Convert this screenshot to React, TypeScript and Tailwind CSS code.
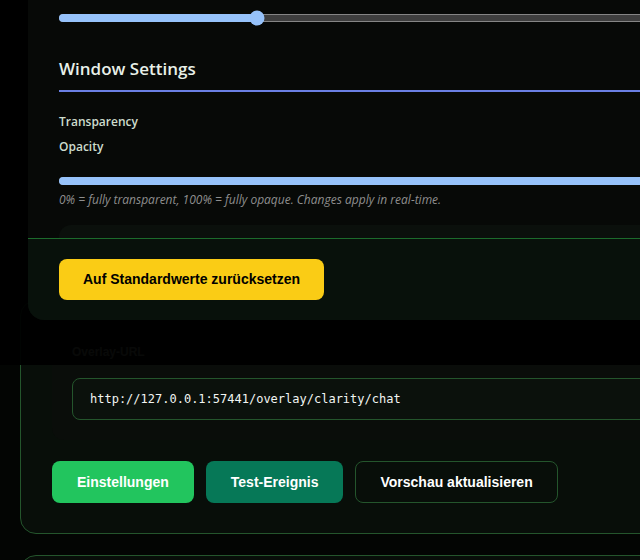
import React from "react";

const Slider = ({ filled, thumb }: { filled: number; thumb?: boolean }) => {
  return (
    <div className="relative h-[8px] w-[640px] rounded-full border border-[#858585] bg-[#3e3e3e]">
      <div
        className="absolute -left-px -top-px h-[8px] rounded-full bg-[#96c2fa]"
        style={{ width: filled }}
      />
      {thumb && (
        <div
          className="absolute top-1/2 h-[15px] w-[15px] -translate-x-1/2 -translate-y-1/2 rounded-full bg-[#96c2fa]"
          style={{ left: filled }}
        />
      )}
    </div>
  );
};

const SettingsModal = () => {
  return (
    <div className="absolute left-[28px] top-0 flex h-[320px] w-[700px] flex-col overflow-hidden rounded-bl-2xl bg-[#070907] font-['Open_Sans',sans-serif]">
      <div className="flex-1 overflow-hidden pl-[31px] pt-[14px]">
        <Slider filled={197} thumb />

        <h2 className="mt-[34px] border-b-2 border-[#6a7fe3] pb-[8px] text-[17px] font-semibold text-[#e8f0e8]">
          Window Settings
        </h2>

        <div className="mt-[21px] text-[12px] font-semibold text-[#cddccd]">
          Transparency
        </div>
        <div className="mt-[7px] text-[12px] font-semibold text-[#cddccd]">
          Opacity
        </div>

        <div className="mt-[21px]">
          <Slider filled={640} />
        </div>
        <p className="mt-[6px] text-[12px] italic text-[#8e8e8e]">
          0% = fully transparent, 100% = fully opaque. Changes apply in real-time.
        </p>

        <div className="mt-[16px] h-[40px] rounded-tl-xl bg-[#0b100c]" />
      </div>

      <div className="border-t border-[#1c6b2c] bg-[#08110b] px-[31px] pb-[20px] pt-[20px]">
        <button className="flex h-[41px] items-center rounded-lg bg-[#facc15] px-6 font-['Liberation_Sans',Arial,sans-serif] text-[14px] font-bold text-black">
          Auf Standardwerte zurücksetzen
        </button>
      </div>
    </div>
  );
};

export default function App() {
  return (
    <div className="relative h-[560px] w-[640px] overflow-hidden bg-[#030503] font-['Liberation_Sans',Arial,sans-serif]">
      <div className="flex flex-col gap-[21px] pl-5 pt-[300px]">
        <div className="w-[700px] rounded-2xl border border-[#24552c] bg-[#080e09] px-[31px] pb-[30px] pt-[39px]">
          <div className="rounded-xl bg-[#0a0d0a] pb-5 pl-5 pt-1">
            <div className="mb-[18px] text-[12px] font-semibold leading-4 text-[#9aa89a]">
              Overlay-URL
            </div>
            <div className="flex h-[42px] items-center rounded-lg border border-[#24552c] bg-[#0b110c] pl-[17px] font-['DejaVu_Sans_Mono',monospace] text-[12px] text-[#f2f5f2]">
              http://127.0.0.1:57441/overlay/clarity/chat
            </div>
          </div>

          <div className="mt-[21px] flex gap-3">
            <button className="flex h-[42px] items-center rounded-lg border border-transparent bg-[#22c55e] px-6 text-[14px] font-bold text-white">
              Einstellungen
            </button>
            <button className="flex h-[42px] items-center rounded-lg border border-transparent bg-[#067857] px-6 text-[14px] font-bold text-white">
              Test-Ereignis
            </button>
            <button className="flex h-[42px] items-center rounded-lg border border-[#24552c] bg-transparent px-6 text-[14px] font-bold text-white">
              Vorschau aktualisieren
            </button>
          </div>
        </div>

        <div className="h-[80px] w-[700px] rounded-2xl border border-[#24552c] bg-[#080e09]" />
      </div>

      <div className="absolute left-0 top-0 h-[365px] w-full bg-black/95">
        <SettingsModal />
      </div>
    </div>
  );
}
